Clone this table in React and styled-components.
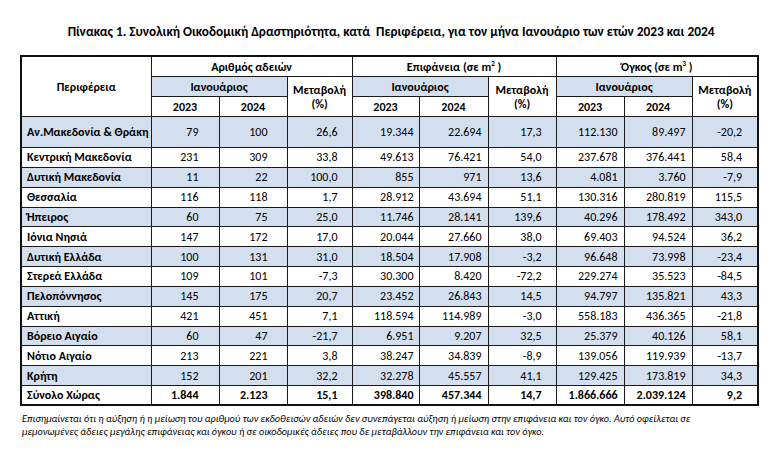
import React from "react";
import styled, { createGlobalStyle } from "styled-components";

const GlobalStyle = createGlobalStyle`
  html, body { margin: 0; padding: 0; background: #ffffff; }
  body { font-family: Carlito, Lato, "Liberation Sans", sans-serif; color: #000; }
`;

const Page = styled.div`
  width: 780px;
  height: 461px;
  box-sizing: border-box;
  padding-top: 23px;
  background: #fff;
`;

const Title = styled.h1`
  margin: 0;
  font-size: 13.3px;
  line-height: 18px;
  font-weight: 700;
  text-align: center;
  white-space: pre;
  padding-left: 2px;
`;

const Table = styled.table`
  margin: 14px 0 0 20px;
  width: 737px;
  table-layout: fixed;
  border-collapse: collapse;
  border: 2px solid #111;
  font-size: 12px;
`;

const HeadCell = styled.th`
  border: 1px solid #1a1a1a;
  background: ${(p) => (p.$blue ? "#d3dfef" : "#ffffff")};
  font-weight: 700;
  text-align: center;
  vertical-align: middle;
  padding: 0;
  line-height: 14px;
  height: 19px;
  white-space: nowrap;
  sup { font-size: 7px; line-height: 0; vertical-align: 5px; }
`;

const Row = styled.tr`
  height: ${(p) => (p.$tall ? "31px" : "19.85px")};
  background: ${(p) => (p.$shade ? "#d3dfef" : "#ffffff")};
  font-weight: ${(p) => (p.$bold ? 700 : 400)};
`;

const RegionCell = styled.td`
  border: 1px solid #1a1a1a;
  font-weight: 700;
  padding: 0 0 0 5px;
  text-align: left;
  white-space: nowrap;
  line-height: 14px;
`;

const NumCell = styled.td`
  border: 1px solid #1a1a1a;
  text-align: right;
  padding: 0 ${(p) => p.$pr}px 0 0;
  white-space: nowrap;
  line-height: 14px;
`;

const Note = styled.p`
  margin: 6px 0 0 22px;
  font-size: 10.2px;
  line-height: 13px;
  font-style: italic;
  white-space: nowrap;
`;

const widths = [130, 68, 68, 65, 67, 69, 68, 68, 68, 66];
const pads = [0, 20, 19, 14, 5, 6, 14, 6, 6, 15];

const rows = [
  ["Αν.Μακεδονία & Θράκη", "79", "100", "26,6", "19.344", "22.694", "17,3", "112.130", "89.497", "-20,2"],
  ["Κεντρική Μακεδονία", "231", "309", "33,8", "49.613", "76.421", "54,0", "237.678", "376.441", "58,4"],
  ["Δυτική Μακεδονία", "11", "22", "100,0", "855", "971", "13,6", "4.081", "3.760", "-7,9"],
  ["Θεσσαλία", "116", "118", "1,7", "28.912", "43.694", "51,1", "130.316", "280.819", "115,5"],
  ["Ήπειρος", "60", "75", "25,0", "11.746", "28.141", "139,6", "40.296", "178.492", "343,0"],
  ["Ιόνια Νησιά", "147", "172", "17,0", "20.044", "27.660", "38,0", "69.403", "94.524", "36,2"],
  ["Δυτική Ελλάδα", "100", "131", "31,0", "18.504", "17.908", "-3,2", "96.648", "73.998", "-23,4"],
  ["Στερεά Ελλάδα", "109", "101", "-7,3", "30.300", "8.420", "-72,2", "229.274", "35.523", "-84,5"],
  ["Πελοπόννησος", "145", "175", "20,7", "23.452", "26.843", "14,5", "94.797", "135.821", "43,3"],
  ["Αττική", "421", "451", "7,1", "118.594", "114.989", "-3,0", "558.183", "436.365", "-21,8"],
  ["Βόρειο Αιγαίο", "60", "47", "-21,7", "6.951", "9.207", "32,5", "25.379", "40.126", "58,1"],
  ["Νότιο Αιγαίο", "213", "221", "3,8", "38.247", "34.839", "-8,9", "139.056", "119.939", "-13,7"],
  ["Κρήτη", "152", "201", "32,2", "32.278", "45.557", "41,1", "129.425", "173.819", "34,3"],
];

const total = ["Σύνολο Χώρας", "1.844", "2.123", "15,1", "398.840", "457.344", "14,7", "1.866.666", "2.039.124", "9,2"];

function DataRow({ cells, shade, tall, bold }) {
  return (
    <Row $shade={shade} $tall={tall} $bold={bold}>
      <RegionCell>{cells[0]}</RegionCell>
      {cells.slice(1).map((c, i) => (
        <NumCell key={i} $pr={pads[i + 1]}>{c}</NumCell>
      ))}
    </Row>
  );
}

export default function App() {
  return (
    <>
      <GlobalStyle />
      <Page>
        <Title>{"Πίνακας 1. Συνολική Οικοδομική Δραστηριότητα, κατά  Περιφέρεια, για τον μήνα Ιανουάριο των ετών 2023 και 2024"}</Title>
        <Table>
          <colgroup>
            {widths.map((w, i) => (
              <col key={i} style={{ width: w }} />
            ))}
          </colgroup>
          <thead>
            <tr>
              <HeadCell rowSpan={3}>Περιφέρεια</HeadCell>
              <HeadCell colSpan={3}>Αριθμός αδειών</HeadCell>
              <HeadCell colSpan={3}>Επιφάνεια (σε m<sup>2</sup> )</HeadCell>
              <HeadCell colSpan={3}>Όγκος (σε m<sup>3</sup> )</HeadCell>
            </tr>
            <tr>
              <HeadCell colSpan={2} $blue>Ιανουάριος</HeadCell>
              <HeadCell rowSpan={2}>Μεταβολή<br />(%)</HeadCell>
              <HeadCell colSpan={2} $blue>Ιανουάριος</HeadCell>
              <HeadCell rowSpan={2}>Μεταβολή<br />(%)</HeadCell>
              <HeadCell colSpan={2} $blue>Ιανουάριος</HeadCell>
              <HeadCell rowSpan={2}>Μεταβολή<br />(%)</HeadCell>
            </tr>
            <tr>
              <HeadCell>2023</HeadCell>
              <HeadCell>2024</HeadCell>
              <HeadCell>2023</HeadCell>
              <HeadCell>2024</HeadCell>
              <HeadCell>2023</HeadCell>
              <HeadCell>2024</HeadCell>
            </tr>
          </thead>
          <tbody>
            {rows.map((r, i) => (
              <DataRow key={r[0]} cells={r} shade={i % 2 === 0} tall={i === 0} />
            ))}
            <DataRow cells={total} bold />
          </tbody>
        </Table>
        <Note>
          Επισημαίνεται ότι η αύξηση ή η μείωση του αριθμού των εκδοθεισών αδειών δεν συνεπάγεται αύξηση ή μείωση στην επιφάνεια και τον όγκο. Αυτό οφείλεται σε
          <br />
          μεμονωμένες άδειες μεγάλης επιφάνειας και όγκου ή σε οικοδομικές άδειες που δε μεταβάλλουν την επιφάνεια και τον όγκο.
        </Note>
      </Page>
    </>
  );
}
